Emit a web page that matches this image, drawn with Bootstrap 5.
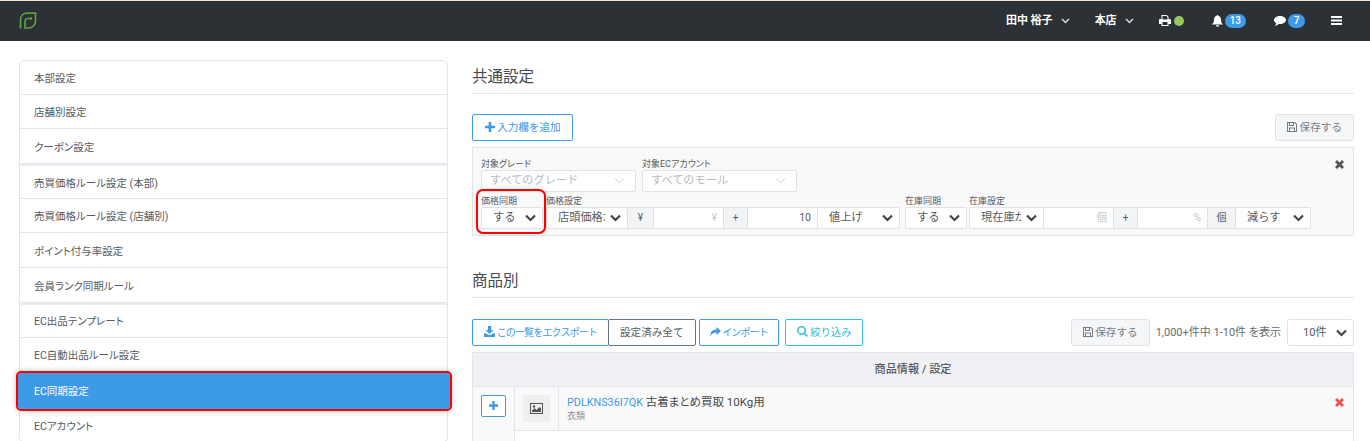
<!DOCTYPE html>
<html lang="ja">
<head>
<meta charset="utf-8">
<title>EC同期設定</title>
<link href="https://cdn.jsdelivr.net/npm/bootstrap@5.3.0/dist/css/bootstrap.min.css" rel="stylesheet">
<style>
html,body{height:441px;overflow:hidden}
body{font-family:"Roboto","Noto Sans CJK JP",sans-serif;font-size:11px;color:#555b61;background:#fff;line-height:1.4;font-feature-settings:"palt"}
svg{fill:currentColor;display:inline-block;vertical-align:-1px}
.topbar{height:41px;background:#2c3136;border-top:1px solid #f2e6d2;color:#fff;padding:0 28px 0 19px;font-weight:700;font-size:11px}
.topitem{display:flex;align-items:center;gap:5px}
.pill{background:#3d9ae8;border-radius:8px;font-size:10px;font-weight:500;height:14px;line-height:14px;padding:0 5px;min-width:17px;text-align:center}
.dot{width:10px;height:10px;background:#96c85a;border-radius:50%}
.shell{padding:19px 16px 0 19px;gap:24px}
.sidenav{width:429px;flex:none}
.sideitem{height:34.7px;display:flex;align-items:center;padding:4px 14px 0;font-size:10.5px;color:#555b61;border-color:#e4e5ec;text-decoration:none}
.sideitem.grp{border-top-width:2px;border-top-color:#ebecf1}
.sideitem.sel{background:#3d9ae8;color:#fff;border-color:#3d9ae8;margin:1px -2px -1px -1px;height:36px;position:relative;z-index:2;border-radius:3px;outline:2px solid #f00;outline-offset:0;box-shadow:0 0 6px 2px rgba(0,0,0,.22);padding-left:15px}
.mainpane{flex:1;min-width:0}
.heading{font-size:15.5px;font-weight:400;color:#444a50;border-bottom:1px solid #e4e5ec;height:34px;margin:0;padding-top:6px;line-height:22px}
.btnx{font-size:10.6px;height:27px;padding:0 11px;line-height:25px;border-radius:2px;white-space:nowrap;background:#fff}
.widebtn{padding:0 11.5px}
.narrowkana{font-size:10px;letter-spacing:-.85px;padding:0 11px}
.importbtn{padding:0 10px}
.tightbtn{letter-spacing:-.35px}
.bluebtn{border:1px solid #3d9ae8;color:#3d9ae8}
.greybtn{border:1px solid #667489;color:#555b61}
.cyanbtn{border:1px solid #2fbfd6;color:#2fbfd6}
.savebtn{border:1px solid #dfe2e6;background:#f5f6f8;color:#777c82;border-radius:3px}
.rulebox{background:#f9f9fa;border:1px solid #e4e5ec;height:89px;margin-top:6px;padding:11px 8px 0;position:relative}
.closex{position:absolute;right:9px;top:12px;color:#555}
.fieldlabel{font-size:9px;line-height:11px;height:11px;color:#555b61;white-space:nowrap;margin-bottom:0}
.slx{height:22px;font-size:11.2px;padding:0 22px 0 11px;border:1px solid #dfe2e6;border-radius:2px;color:#555b61;line-height:20px;background-color:#fff;background-size:11px 8px;background-position:right 6px center;background-image:url("data:image/svg+xml,%3csvg xmlns='http://www.w3.org/2000/svg' viewBox='0 0 11 8'%3e%3cpath fill='none' stroke='%23444' stroke-width='2.2' d='M1 1.5l4.500 4.500 4.500-4.500'/%3e%3c/svg%3e");box-shadow:none}
.slx:disabled{color:#b8bcc2;background-color:#fff;background-image:url("data:image/svg+xml,%3csvg xmlns='http://www.w3.org/2000/svg' viewBox='0 0 11 8'%3e%3cpath fill='none' stroke='%23c8ccd0' stroke-width='1' d='M1 1.5l4.500 4.500 4.500-4.500'/%3e%3c/svg%3e");padding-left:8px;background-position:right 10px center}
.joined{display:flex;height:22px}
.joined>*{margin-left:-1px;flex:none}
.joined>*:first-child{margin-left:0}
.addon{border:1px solid #dfe2e6;background:#f3f4f6;display:flex;align-items:center;justify-content:center;font-size:10px;color:#555b61;height:22px}
.numbox{border:1px solid #dfe2e6;background:#fff;height:22px;font-size:10.5px;text-align:right;padding:0 6px;color:#c3c6ca;line-height:20px}
.numdark{color:#555b61}
.w62{width:62px}.w155{width:155px}.w81{width:82px}.w27{width:27px}.w71{width:71px}.w25{width:25px}.w83{width:83px}.w75{width:75px}.w29{width:29px}.w76{width:76px}
.redbox{outline:2px solid #f00;outline-offset:0;border-radius:5px;width:66px;padding:5px 1px 3px 3px;margin:-5px 0 -3px -3px;box-shadow:0 0 6px 1px rgba(0,0,0,.15);position:relative}
.prodgrid{margin:6px 0 0;border:1px solid #e4e5ec;table-layout:fixed;width:100%;font-size:11px}
.prodgrid th{background:#f0f1f5;height:34px;text-align:center;font-weight:500;color:#555b61;font-size:11.2px;border-bottom:1px solid #e4e5ec;padding:0}
.prodgrid td{border-bottom:1px solid #e4e5ec;padding:0;vertical-align:top;background:#f9f9fa;height:44px}
.prodgrid .plainrow td{background:#fff;height:30px;border-bottom:0}
.leftcell{border-right:1px solid #e4e5ec}
.plusbtn{display:block;width:25px;height:22px;margin:8px auto 0;border:1px solid #3d9ae8;border-radius:2px;background:#fff;color:#3d9ae8;padding:0;line-height:18px}
.picbox{width:27px;height:27px;background:#efefef;margin:8px auto 0;display:flex;align-items:center;justify-content:center;color:#555}
.prodcode{color:#3d9ae8;font-size:10.8px}
.prodname{color:#444a50;font-size:11.5px}
.cat{font-size:9px;color:#888d93;line-height:12px}
.delx{color:#f05050}
.countlabel{font-size:11px;color:#666c72;white-space:nowrap}
</style>
</head>
<body>
<nav class="topbar d-flex align-items-center justify-content-between">
  <svg width="18" height="18" viewBox="0 0 18 18" style="fill:none;stroke:#5f9e3f;stroke-width:1.7"><path d="M1.500 16.500V8C1.500 4 4 1.200 8 1.200h8.500V9c0 4-3 7-7 7H6V9.500c0-1.800 1.200-3 3-3h4"/><circle cx="12" cy="6.500" r=".4"/></svg>
  <div class="d-flex align-items-center">
    <div class="topitem" style="margin-right:25px">田中 裕子 <svg width="9" height="6" viewBox="0 0 9 6" style="fill:none;stroke:#d5d8db;stroke-width:1.500;margin-left:3px"><path d="M1 1l3.500 3.500L8 1"/></svg></div>
    <div class="topitem" style="margin-right:25px">本店 <svg width="9" height="6" viewBox="0 0 9 6" style="fill:none;stroke:#d5d8db;stroke-width:1.500;margin-left:3px"><path d="M1 1l3.500 3.500L8 1"/></svg></div>
    <div class="topitem" style="gap:3px;margin-right:28px"><svg width="12" height="11" viewBox="0 0 12 11"><path fill-rule="evenodd" d="M2.500 0h5.300L9.500 1.700V4H11a1 1 0 0 1 1 1v4H9.500v2h-7V9H0V5a1 1 0 0 1 1-1h1.500zM3.500 1v3.500h5V2.200L7.400 1zM3.500 7v3h5V7z"/></svg><span class="dot"></span></div>
    <div class="topitem" style="gap:2px;margin-right:28px"><svg width="11" height="12" viewBox="0 0 11 12"><path d="M5.500 0c.5 0 .8.300.8.800C8 1.200 9 2.600 9 4.500c0 2.500.7 3.800 2 5H0c1.300-1.200 2-2.500 2-5 0-1.900 1-3.300 2.700-3.700 0-.5.300-.8.800-.8zM4 10.300h3a1.500 1.500 0 0 1-3 0z"/></svg><span class="pill">13</span></div>
    <div class="topitem" style="gap:2px;margin-right:26px"><svg width="12" height="10" viewBox="0 0 12 10"><path d="M6 0c3.300 0 6 1.800 6 4s-2.700 4-6 4c-.5 0-1 0-1.400-.1C3.500 9 2.200 9.600 1 9.800c.7-.7 1.100-1.500 1.200-2.700C.8 6.400 0 5.300 0 4c0-2.200 2.700-4 6-4z"/></svg><span class="pill">7</span></div>
    <svg width="11" height="9" viewBox="0 0 11 9"><path d="M0 0h11v2H0zM0 3.500h11v2H0zM0 7h11v2H0z"/></svg>
  </div>
</nav>

<div class="shell d-flex align-items-start">
  <div class="list-group sidenav">
    <a class="list-group-item sideitem">本部設定</a>
    <a class="list-group-item sideitem">店舗別設定</a>
    <a class="list-group-item sideitem">クーポン設定</a>
    <a class="list-group-item sideitem grp">売買価格ルール設定 (本部)</a>
    <a class="list-group-item sideitem">売買価格ルール設定 (店舗別)</a>
    <a class="list-group-item sideitem">ポイント付与率設定</a>
    <a class="list-group-item sideitem">会員ランク同期ルール</a>
    <a class="list-group-item sideitem grp">EC出品テンプレート</a>
    <a class="list-group-item sideitem">EC自動出品ルール設定</a>
    <a class="list-group-item sideitem sel">EC同期設定</a>
    <a class="list-group-item sideitem">ECアカウント</a>
  </div>

  <div class="mainpane">
    <h2 class="heading">共通設定</h2>
    <div class="d-flex justify-content-between" style="margin-top:20px">
      <button class="btnx bluebtn widebtn"><svg width="10" height="10" viewBox="0 0 10 10"><path d="M3.700 0h2.600v3.700H10v2.600H6.300V10H3.700V6.300H0V3.700h3.700z"/></svg> 入力欄を追加</button>
      <button class="btnx savebtn"><svg width="10" height="10" viewBox="0 0 10 10"><path fill-rule="evenodd" d="M0 0h8l2 2v8H0zM1 1v8h1V5.500h6V9h1V2.500L7.500 1H7v3H2V1zM3 6.500V9h4V6.500zM3 1v2h3V1z"/></svg> 保存する</button>
    </div>

    <div class="rulebox">
      <svg class="closex" width="9" height="9" viewBox="0 0 9 9"><path d="M0 2l2-2 2.500 2.500L7 0l2 2-2.500 2.500L9 7 7 9 4.500 6.500 2 9 0 7l2.500-2.500z"/></svg>
      <div class="d-flex" style="gap:6px">
        <div><div class="fieldlabel">対象グレード</div><select class="form-select slx w155" disabled><option>すべてのグレード</option></select></div>
        <div><div class="fieldlabel">対象ECアカウント</div><select class="form-select slx w155" disabled><option>すべてのモール</option></select></div>
      </div>
      <div class="d-flex" style="margin-top:4px">
        <div class="redbox"><div class="fieldlabel">価格同期</div><select class="form-select slx w62"><option>する</option></select></div>
        <div style="margin-left:2px;width:354px"><div class="fieldlabel">価格設定</div>
          <div class="joined">
            <select class="form-select slx w81"><option>店頭価格からの値</option></select>
            <div class="addon w27">¥</div>
            <div class="numbox w71">¥</div>
            <div class="addon w25">+</div>
            <div class="numbox numdark w71">10</div>
            <select class="form-select slx w83"><option>値上げ</option></select>
          </div>
        </div>
        <div style="margin-left:5px"><div class="fieldlabel">在庫同期</div><select class="form-select slx w62"><option>する</option></select></div>
        <div style="margin-left:2px"><div class="fieldlabel">在庫設定</div>
          <div class="joined">
            <select class="form-select slx w75"><option>現在庫から計算</option></select>
            <div class="numbox w71">個</div>
            <div class="addon w25">+</div>
            <div class="numbox w71">%</div>
            <div class="addon w29">個</div>
            <select class="form-select slx w76"><option>減らす</option></select>
          </div>
        </div>
      </div>
    </div>

    <h2 class="heading" style="margin-top:28px">商品別</h2>

    <div class="d-flex justify-content-between align-items-center" style="margin-top:21px">
      <div class="d-flex">
        <button class="btnx bluebtn narrowkana"><svg width="11" height="11" viewBox="0 0 11 11"><path d="M4 0h3v4h2.500L5.500 8l-4-4H4zM0 7.500h2.500l1.500 1.500h3l1.500-1.500H11V11H0z"/></svg> この一覧をエクスポート</button>
        <button class="btnx greybtn" style="margin-left:-1px;margin-right:3px">設定済み全て</button>
        <button class="btnx bluebtn narrowkana importbtn" style="margin-right:6px"><svg width="11" height="10" viewBox="0 0 11 10"><path d="M6.500 0L11 4 6.500 8V5.500C3.500 5.500 1.500 6.500.5 9.500c-.5-4 1.500-7 6-7z"/></svg> インポート</button>
        <button class="btnx cyanbtn tightbtn"><svg width="11" height="11" viewBox="0 0 11 11"><path fill-rule="evenodd" d="M4.500 0a4.500 4.500 0 0 1 3.600 7.200L11 9.800 9.800 11 7.100 8.200A4.500 4.500 0 1 1 4.500 0zm0 1.500a3 3 0 1 0 0 6 3 3 0 0 0 0-6z"/></svg> 絞り込み</button>
      </div>
      <div class="d-flex align-items-center">
        <button class="btnx savebtn"><svg width="10" height="10" viewBox="0 0 10 10"><path fill-rule="evenodd" d="M0 0h8l2 2v8H0zM1 1v8h1V5.500h6V9h1V2.500L7.500 1H7v3H2V1zM3 6.500V9h4V6.500zM3 1v2h3V1z"/></svg> 保存する</button>
        <span class="countlabel" style="margin:0 6px">1,000+件中 1-10件 を表示</span>
        <select class="form-select slx" style="width:67px;height:27px;line-height:25px;padding-left:15px;border-radius:3px"><option>10件</option></select>
      </div>
    </div>

    <table class="prodgrid">
      <colgroup><col style="width:42px"><col style="width:44px"><col></colgroup>
      <thead><tr><th colspan="3">商品情報 / 設定</th></tr></thead>
      <tbody>
        <tr>
          <td class="leftcell" rowspan="2" style="border-bottom:0"><button class="plusbtn"><svg width="9" height="9" viewBox="0 0 10 10"><path d="M3.700 0h2.600v3.700H10v2.600H6.300V10H3.700V6.300H0V3.700h3.700z"/></svg></button></td>
          <td class="leftcell"><div class="picbox"><svg width="13" height="11" viewBox="0 0 13 11"><path fill-rule="evenodd" d="M0 0h13v11H0zM1 1v9h11V1zM2 9V7.500L4.500 5l2 2 3-3L11 5.500V9zM4 2.200a1.300 1.300 0 1 1 0 2.600 1.300 1.300 0 0 1 0-2.600z"/></svg></div></td>
          <td>
            <div class="d-flex justify-content-between" style="padding:7px 9px 0 8px">
              <div><span class="prodcode">PDLKNS36I7QK</span> <span class="prodname">古着まとめ買取 10Kg用</span><div class="cat">衣類</div></div>
              <svg class="delx" width="9" height="9" viewBox="0 0 9 9" style="margin-top:4px"><path d="M0 2l2-2 2.500 2.500L7 0l2 2-2.500 2.500L9 7 7 9 4.500 6.500 2 9 0 7l2.500-2.500z"/></svg>
            </div>
          </td>
        </tr>
        <tr class="plainrow"><td></td><td></td></tr>
      </tbody>
    </table>
  </div>
</div>
<script src="https://cdn.jsdelivr.net/npm/bootstrap@5.3.0/dist/js/bootstrap.bundle.min.js"></script>
</body>
</html>
